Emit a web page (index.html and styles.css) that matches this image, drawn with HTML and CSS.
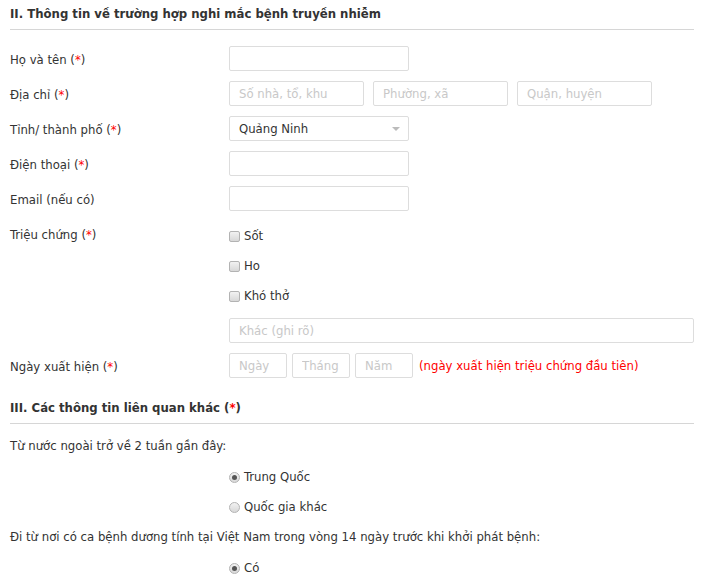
FILE: index.html
```html
<!DOCTYPE html>
<html lang="vi">
<head>
  <meta charset="UTF-8" />
  <meta name="viewport" content="width=device-width, initial-scale=1.0" />
  <title>Khai báo y tế</title>
  <link rel="stylesheet" href="styles.css">
</head>
<body>

<form class="report">
  <h3 class="section-title">II. Thông tin về trường hợp nghi mắc bệnh truyền nhiễm</h3>

  <div class="row">
    <label class="row-label">Họ và tên (<span class="req">*</span>)</label>
    <div class="row-field"><input type="text" class="w-md" /></div>
  </div>

  <div class="row">
    <label class="row-label">Địa chỉ (<span class="req">*</span>)</label>
    <div class="row-field inline">
      <input type="text" class="w-sm" placeholder="Số nhà, tổ, khu" />
      <input type="text" class="w-sm" placeholder="Phường, xã" />
      <input type="text" class="w-sm" placeholder="Quận, huyện" />
    </div>
  </div>

  <div class="row">
    <label class="row-label">Tỉnh/ thành phố (<span class="req">*</span>)</label>
    <div class="row-field">
      <div class="select-wrap w-md">
        <select>
          <option>Quảng Ninh</option>
          <option>Hà Nội</option>
          <option>Hải Phòng</option>
        </select>
      </div>
    </div>
  </div>

  <div class="row">
    <label class="row-label">Điện thoại (<span class="req">*</span>)</label>
    <div class="row-field"><input type="tel" class="w-md" /></div>
  </div>

  <div class="row">
    <label class="row-label">Email (nếu có)</label>
    <div class="row-field"><input type="email" class="w-md" /></div>
  </div>

  <div class="row">
    <label class="row-label">Triệu chứng (<span class="req">*</span>)</label>
    <div class="row-field">
      <label class="choice"><input type="checkbox" /> Sốt</label>
      <label class="choice"><input type="checkbox" /> Ho</label>
      <label class="choice"><input type="checkbox" /> Khó thở</label>
      <input type="text" class="w-full other" placeholder="Khác (ghi rõ)" />
    </div>
  </div>

  <div class="row">
    <label class="row-label">Ngày xuất hiện (<span class="req">*</span>)</label>
    <div class="row-field inline date">
      <input type="text" class="w-xs" placeholder="Ngày" />
      <input type="text" class="w-xs" placeholder="Tháng" />
      <input type="text" class="w-xs" placeholder="Năm" />
      <span class="hint">(ngày xuất hiện triệu chứng đầu tiên)</span>
    </div>
  </div>

  <h3 class="section-title second">III. Các thông tin liên quan khác (<span class="req">*</span>)</h3>

  <div class="question">
    <p>Từ nước ngoài trở về 2 tuần gần đây:</p>
    <label class="choice indent"><input type="radio" name="abroad" checked /> Trung Quốc</label>
    <label class="choice indent"><input type="radio" name="abroad" /> Quốc gia khác</label>
  </div>

  <div class="question">
    <p>Đi từ nơi có ca bệnh dương tính tại Việt Nam trong vòng 14 ngày trước khi khởi phát bệnh:</p>
    <label class="choice indent"><input type="radio" name="local" checked /> Có</label>
    <label class="choice indent"><input type="radio" name="local" /> Không</label>
  </div>
</form>

</body>
</html>
```

FILE: styles.css
```css
body {
  margin: 0;
  font-family: 'DejaVu Sans Condensed', 'DejaVu Sans', sans-serif;
  font-size: 13px;
  color: #333;
  background: #fff;
}
.report {
  padding: 0 8px 0 10px;
}
.section-title {
  margin: 4px 0 16px;
  padding-bottom: 5px;
  line-height: 20px;
  font-size: 13px;
  font-weight: bold;
  border-bottom: 1px solid #d6d6d6;
}
.section-title.second {
  margin-top: 20px;
  margin-bottom: 7px;
}
.req {
  color: #f00;
}
.row {
  display: flex;
  margin-bottom: 10px;
}
.row-label {
  width: 219px;
  flex-shrink: 0;
  padding-top: 4px;
  line-height: 20px;
}
.row-field {
  flex: 1;
}
.row-field.inline {
  display: flex;
  align-items: center;
  gap: 9px;
}
.row-field.date {
  gap: 5px;
}
input[type=text], input[type=tel], input[type=email], select {
  box-sizing: border-box;
  height: 25px;
  margin: 0;
  padding: 0 9px;
  border: 1px solid #ddd;
  border-radius: 2px;
  font-family: inherit;
  font-size: 13px;
  color: #333;
  background: #fff;
  outline: none;
}
::placeholder {
  color: #c8c8c8;
}
.w-md { width: 180px; }
.w-sm { width: 135px; }
.w-xs { width: 58px; }
.w-full { width: 100%; }
.row-field .other {
  display: block;
  margin-top: 7px;
}
.hint {
  color: #f00;
  margin-left: 1px;
}

/* custom select with a small grey caret */
.select-wrap {
  position: relative;
}
.select-wrap select {
  width: 100%;
  appearance: none;
  -webkit-appearance: none;
}
.select-wrap::after {
  content: "";
  position: absolute;
  right: 9px;
  top: 11px;
  border-left: 4px solid transparent;
  border-right: 4px solid transparent;
  border-top: 4px solid #bbb;
  pointer-events: none;
}

/* checkboxes and radios */
.choice {
  display: flex;
  align-items: center;
  line-height: 30px;
}
.choice input {
  appearance: none;
  -webkit-appearance: none;
  width: 11px;
  height: 11px;
  margin: 0 4px 0 0;
  border: 1px solid #b3b3b3;
  background: linear-gradient(#f2f2f2, #d8d8d8);
  box-sizing: border-box;
}
.choice input[type=checkbox] {
  border-radius: 2px;
}
.choice input[type=radio] {
  border-radius: 50%;
  position: relative;
}
.choice input[type=radio]:checked::after {
  content: "";
  position: absolute;
  left: 2px;
  top: 2px;
  width: 5px;
  height: 5px;
  border-radius: 50%;
  background: #555;
}
.indent {
  margin-left: 219px;
}
.question p {
  margin: 0 0 1px;
  line-height: 30px;
}
```
